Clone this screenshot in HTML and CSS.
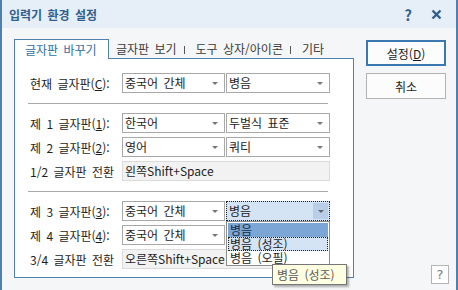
FILE: index.html
```html
<!DOCTYPE html>
<html lang="ko">
<head>
    <meta charset="UTF-8">
    <title>입력기 환경 설정</title>
    <link rel="stylesheet" href="styles.css">
</head>
<body>

    <div class="window">
        <div class="titlebar">
            <span class="title">입력기 환경 설정</span>
            <span class="title-help">?</span>
            <svg class="title-close" width="11" height="11" viewBox="0 0 11 11">
                <path d="M1.5 1.5L9.5 9.5M9.5 1.5L1.5 9.5" stroke="#2f5f8e" stroke-width="2.4"/>
            </svg>
        </div>

        <div class="content">
            <div class="tabs-area">
                <div class="tabstrip">
                    <div class="tab tab-active">글자판 바꾸기</div>
                    <div class="tab">글자판 보기</div>
                    <span class="tab-sep"></span>
                    <div class="tab">도구 상자/아이콘</div>
                    <span class="tab-sep"></span>
                    <div class="tab">기타</div>
                </div>

                <div class="panel">
                    <div class="row">
                        <div class="label">현재 글자판(<u>C</u>):</div>
                        <div class="combo">중국어 간체</div>
                        <div class="combo combo-right">병음</div>
                    </div>

                    <div class="sep"></div>

                    <div class="row">
                        <div class="label">제 1 글자판(<u>1</u>):</div>
                        <div class="combo">한국어</div>
                        <div class="combo combo-right">두벌식 표준</div>
                    </div>
                    <div class="row">
                        <div class="label">제 2 글자판(<u>2</u>):</div>
                        <div class="combo">영어</div>
                        <div class="combo combo-right">쿼티</div>
                    </div>
                    <div class="row">
                        <div class="label">1/2 글자판 전환</div>
                        <div class="field">왼쪽Shift+Space</div>
                    </div>

                    <div class="sep"></div>

                    <div class="row">
                        <div class="label">제 3 글자판(<u>3</u>):</div>
                        <div class="combo">중국어 간체</div>
                        <div class="combo combo-right combo-open">
                            병음
                            <div class="dropdown">
                                <div class="option option-selected">병음</div>
                                <div class="option option-hover">병음 (성조)</div>
                                <div class="option">병음 (오필)</div>
                                <div class="tooltip">병음 (성조)</div>
                            </div>
                        </div>
                    </div>
                    <div class="row">
                        <div class="label">제 4 글자판(<u>4</u>):</div>
                        <div class="combo">중국어 간체</div>
                        <div class="combo combo-right"></div>
                    </div>
                    <div class="row">
                        <div class="label">3/4 글자판 전환</div>
                        <div class="field">오른쪽Shift+Space</div>
                    </div>
                </div>
            </div>

            <div class="side">
                <button class="btn btn-default">설정(<u>D</u>)</button>
                <button class="btn">취소</button>
                <button class="help">?</button>
            </div>
        </div>
    </div>

</body>
</html>
```

FILE: styles.css
```css
* {
    box-sizing: border-box;
    margin: 0;
    padding: 0;
}

body {
    font-family: "Noto Sans CJK KR", "Noto Sans", sans-serif;
    font-size: 12px;
    word-spacing: 2px;
    color: #1e1e1e;
    background-color: #f4f6f8;
}

.window {
    width: 458px;
    height: 290px;
    background: #f4f6f8;
    border-left: 2px solid #4f80ae;
    border-right: 2px solid #4f80ae;
}

.titlebar {
    height: 28px;
    background: #e6eef7;
    display: flex;
    align-items: center;
    padding-left: 7px;
}

.title {
    flex: 1;
    font-weight: bold;
    color: #2f5f8e;
}

.title-help {
    font-size: 15px;
    font-weight: bold;
    color: #2f5f8e;
    margin-right: 19px;
}

.title-close {
    margin-right: 14px;
}

.content {
    display: flex;
    padding: 11px 7px 0 12px;
}

.tabs-area {
    width: 340px;
}

.tabstrip {
    display: flex;
    align-items: center;
    height: 19px;
    color: #3a3a3a;
}

.tab {
    line-height: 19px;
    white-space: nowrap;
}

.tab-active {
    align-self: flex-start;
    width: 95px;
    height: 20px;
    margin-right: 7px;
    padding-left: 10px;
    background: white;
    border: 1px solid #4f80ae;
    border-bottom: none;
    color: #2e6da4;
    position: relative;
    z-index: 1;
}

.tab-sep {
    width: 1px;
    height: 8px;
    margin: 2px 11px 0 7px;
    background: #555;
}

.panel {
    height: 220px;
    background: white;
    border: 1px solid #4f80ae;
    padding: 14px 0 0 15px;
}

.row {
    display: flex;
    align-items: center;
    height: 20px;
}

.row + .row {
    margin-top: 4px;
}

.label {
    width: 92px;
    white-space: nowrap;
}

.combo {
    position: relative;
    width: 103px;
    height: 20px;
    padding-left: 2px;
    line-height: 18px;
    background: white;
    border: 1px solid #a8a8a8;
}

.combo::after {
    content: "";
    position: absolute;
    right: 6px;
    top: 8px;
    border-left: 3px solid transparent;
    border-right: 3px solid transparent;
    border-top: 3px solid #777;
}

.combo-right {
    width: 104px;
    margin-left: 1px;
}

.combo-open {
    background: #d5e4f4;
    border: 1px dotted #222;
}

.combo-open::before {
    content: "";
    position: absolute;
    right: 1px;
    top: 1px;
    width: 15px;
    height: 16px;
    background: #b9cee7;
}

.combo-open::after {
    right: 5px;
    border-top-color: #666;
}

.dropdown {
    position: absolute;
    left: -1px;
    top: 19px;
    width: 104px;
    height: 45px;
    padding: 1px;
    background: white;
    border: 1px solid #8d8d8d;
    z-index: 2;
}

.option {
    height: 14px;
    line-height: 14px;
    padding-left: 2px;
    white-space: nowrap;
}

.option-selected {
    background: #7ca6d6;
    color: #162c46;
}

.option-hover {
    background: #d5e4f4;
    border: 1px dotted #222;
    line-height: 12px;
    padding-left: 1px;
}

.tooltip {
    position: absolute;
    left: 45px;
    top: 42px;
    width: 75px;
    height: 21px;
    padding-left: 4px;
    line-height: 19px;
    color: #5c5c5c;
    background: #ffffe1;
    border: 1px solid #767676;
    box-shadow: 2px 2px 2px rgba(0, 0, 0, 0.3);
    white-space: nowrap;
}

.field {
    width: 208px;
    height: 20px;
    padding-left: 2px;
    line-height: 18px;
    background: #f2f2f2;
    border: 1px solid #dadada;
    white-space: nowrap;
}

.sep {
    height: 1px;
    width: 300px;
    margin: 10px 0 9px -2px;
    background: #a9a9a9;
}

.side {
    display: flex;
    flex-direction: column;
    width: 83px;
    height: 244px;
    margin: 1px 0 0 12px;
}

.btn {
    width: 80px;
    height: 26px;
    font-family: inherit;
    font-size: 12px;
    color: #1e1e1e;
    background: #fcfcfc;
    border: 1px solid #b3b3b3;
}

.btn + .btn {
    margin-top: 7px;
}

.btn-default {
    border: 2px solid #3c78b0;
}

.help {
    align-self: flex-end;
    margin-top: auto;
    width: 18px;
    height: 19px;
    font-family: "DejaVu Sans", sans-serif;
    font-size: 13px;
    color: #777;
    background: white;
    border: 1px solid #b3b3b3;
}
```
